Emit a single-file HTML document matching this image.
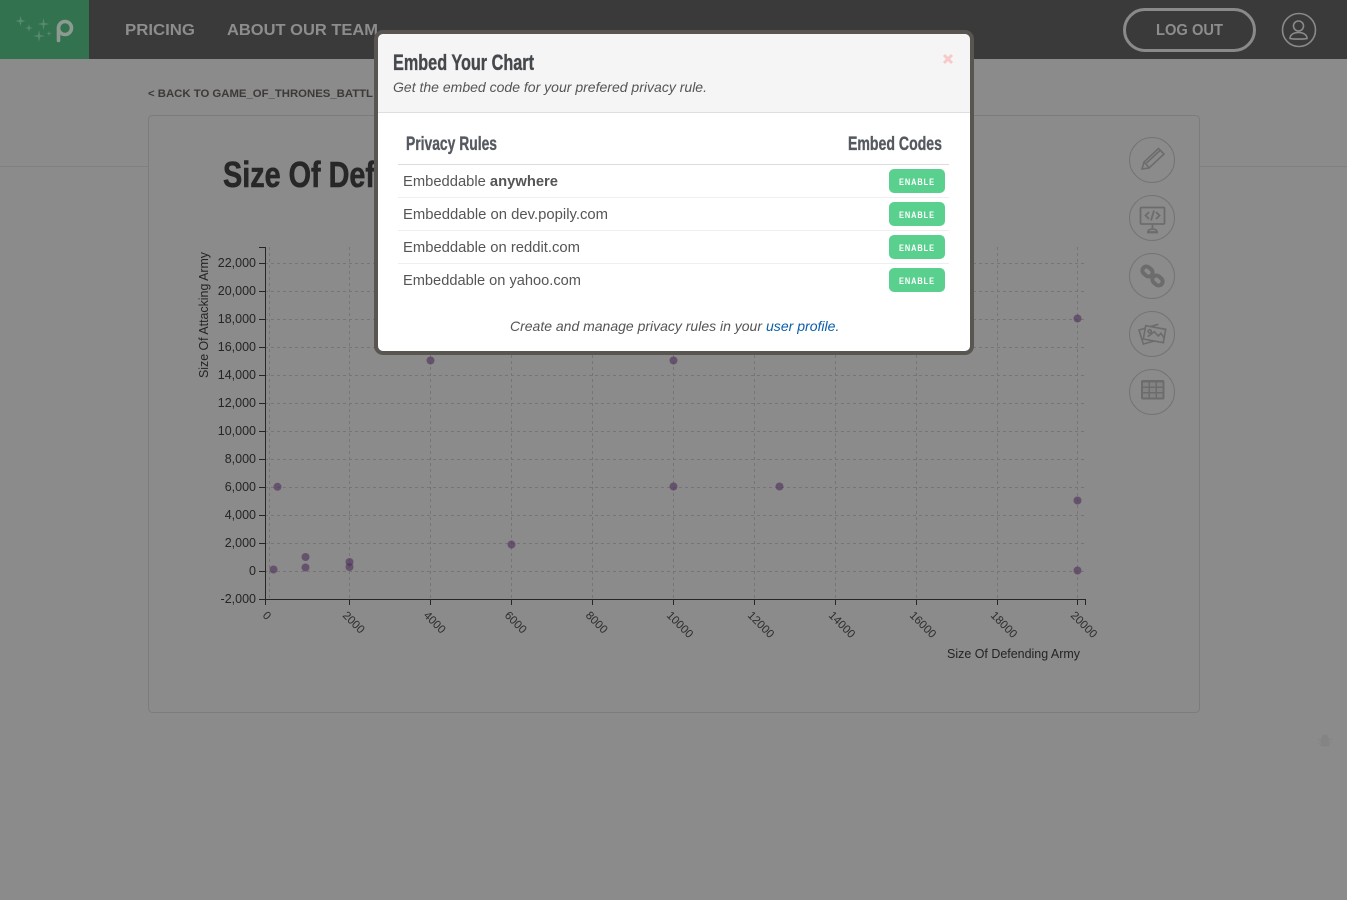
<!DOCTYPE html>
<html><head><meta charset="utf-8"><title>Embed Your Chart</title>
<style>
html,body{margin:0;padding:0;width:1347px;height:900px;overflow:hidden;background:#8b8b8b}
svg{display:block;position:absolute;left:0;top:0}
text{font-family:"Liberation Sans",sans-serif}
.b{font-weight:700}
.y text{font-size:12.5px;fill:#242424;text-anchor:end}
.x text{font-size:11.5px;fill:#2c2c2c}
.row{font-size:14.5px;fill:#555}
.btn{font-size:9.5px;font-weight:700;fill:#fff;letter-spacing:1.2px}
.ic{fill:none;stroke:#6c6c6c;stroke-width:1.6}
.cond{stroke-width:.35;font-weight:700}
</style></head><body>
<svg width="1347" height="900" viewBox="0 0 1347 900" xmlns="http://www.w3.org/2000/svg">
<rect width="1347" height="900" fill="#8b8b8b"/>
<rect y="166" width="1347" height="1" fill="#808080"/>
<!-- header -->
<rect width="1347" height="59" fill="#3a3a3a"/>
<rect width="89" height="59" fill="#32724f"/>
<g fill="#588a70">
<path d="M20.500 16l1 4 4 1-4 1-1 4-1-4-4-1 4-1z"/>
<path d="M29 24l.8 3.200 3.200.8-3.200.8-.8 3.200-.8-3.200-3.200-.8 3.200-.8z"/>
<path d="M43.500 18l1 5 5 1-5 1-1 5-1-5-5-1 5-1z"/>
<path d="M39 30l1 5 5 1-5 1-1 5-1-5-5-1 5-1z"/>
<path d="M49 31l.6 1.900 1.900.6-1.900.6-.6 1.900-.6-1.900-1.900-.6 1.900-.6z"/>
</g>
<circle cx="65" cy="28" r="6.500" fill="none" stroke="#8c9a92" stroke-width="3.600"/>
<path d="M58.500 28V40.500" fill="none" stroke="#8c9a92" stroke-width="3.600" stroke-linecap="round"/>
<text x="125" y="35" class="b" font-size="15.500" fill="#8d8d8d" textLength="70" lengthAdjust="spacingAndGlyphs">PRICING</text>
<text x="227" y="35" class="b" font-size="15.500" fill="#8d8d8d" textLength="151" lengthAdjust="spacingAndGlyphs">ABOUT OUR TEAM</text>
<rect x="1124.500" y="9.500" width="130" height="41" rx="20.500" fill="none" stroke="#8a8a8a" stroke-width="3"/>
<text x="1156" y="35" class="b" font-size="16" fill="#8d8d8d" textLength="67" lengthAdjust="spacingAndGlyphs">LOG OUT</text>
<circle cx="1299" cy="30" r="16.500" fill="none" stroke="#8a8a8a" stroke-width="1.600"/>
<circle cx="1298.500" cy="26" r="5" fill="none" stroke="#8a8a8a" stroke-width="1.600"/>
<path d="M1290 38.500c0-4 4-6 8.500-6s8.500 2 8.500 6c-3 .8-14 .8-17 0z" fill="none" stroke="#8a8a8a" stroke-width="1.600"/>
<!-- back -->
<text x="148" y="97" class="b" font-size="11" fill="#3c3936" textLength="225" lengthAdjust="spacingAndGlyphs">&lt; BACK TO GAME_OF_THRONES_BATTL</text>
<!-- card -->
<rect x="148.500" y="115.500" width="1051" height="597" rx="4" fill="#8b8b8b" stroke="#7c7c7c"/>
<text x="223" y="187" class="cond" font-size="36" fill="#272727" stroke="#272727" style="stroke-width:.6" textLength="152" lengthAdjust="spacingAndGlyphs">Size Of Def</text>
<!-- grid -->
<g fill="none" stroke="#757575" stroke-dasharray="3 3">
<path d="M269.500 247V599M349.500 247V599M430.500 247V599M511.500 247V599M592.500 247V599M673.500 247V599M754.500 247V599M835.500 247V599M916.500 247V599M997.500 247V599M1077.500 247V599"/>
<path d="M265 263.500H1085M265 291.500H1085M265 319.500H1085M265 347.500H1085M265 375.500H1085M265 403.500H1085M265 431.500H1085M265 459.500H1085M265 487.500H1085M265 515.500H1085M265 543.500H1085M265 571.500H1085"/>
</g>
<!-- axes -->
<g fill="none" stroke="#262626">
<path d="M259 247.500H265.500V599.500H259"/>
<path d="M259 263.500H265M259 291.500H265M259 319.500H265M259 347.500H265M259 375.500H265M259 403.500H265M259 431.500H265M259 459.500H265M259 487.500H265M259 515.500H265M259 543.500H265M259 571.500H265"/>
<path d="M265 599.500H1085.500V605M265.500 599.500V605M349.500 599V605M430.500 599V605M511.500 599V605M592.500 599V605M673.500 599V605M754.500 599V605M835.500 599V605M916.500 599V605M997.500 599V605M1077.500 599V605"/>
</g>
<g class="y">
<text x="256" y="267">22,000</text><text x="256" y="295">20,000</text><text x="256" y="323">18,000</text><text x="256" y="351">16,000</text><text x="256" y="379">14,000</text><text x="256" y="407">12,000</text><text x="256" y="435">10,000</text><text x="256" y="463">8,000</text><text x="256" y="491">6,000</text><text x="256" y="519">4,000</text><text x="256" y="547">2,000</text><text x="256" y="575">0</text><text x="256" y="603">-2,000</text>
</g>
<g class="x">
<text transform="translate(262 616) rotate(45)">0</text>
<text transform="translate(342 616) rotate(45)">2000</text>
<text transform="translate(423 616) rotate(45)">4000</text>
<text transform="translate(504 616) rotate(45)">6000</text>
<text transform="translate(585 616) rotate(45)">8000</text>
<text transform="translate(666 616) rotate(45)">10000</text>
<text transform="translate(747 616) rotate(45)">12000</text>
<text transform="translate(828 616) rotate(45)">14000</text>
<text transform="translate(909 616) rotate(45)">16000</text>
<text transform="translate(990 616) rotate(45)">18000</text>
<text transform="translate(1070 616) rotate(45)">20000</text>
</g>
<text transform="translate(208 378) rotate(-90)" font-size="12.500" fill="#242424" textLength="126" lengthAdjust="spacingAndGlyphs">Size Of Attacking Army</text>
<text x="947" y="658" font-size="13" fill="#242424" textLength="133" lengthAdjust="spacingAndGlyphs">Size Of Defending Army</text>
<!-- dots -->
<g fill="#4d2e5c" fill-opacity=".6">
<circle cx="273.500" cy="569.500" r="4"/><circle cx="277.500" cy="486.800" r="4"/><circle cx="305.500" cy="557" r="4"/><circle cx="305.500" cy="567.500" r="4"/><circle cx="349.500" cy="562" r="4"/><circle cx="349.500" cy="567" r="4"/><circle cx="511.500" cy="544.500" r="4"/><circle cx="430.500" cy="360.500" r="4"/><circle cx="673.500" cy="360.500" r="4"/><circle cx="673.500" cy="486.500" r="4"/><circle cx="779.500" cy="486.500" r="4"/><circle cx="1077.500" cy="318.500" r="4"/><circle cx="1077.500" cy="500.500" r="4"/><circle cx="1077.500" cy="570.500" r="4"/>
</g>
<!-- side icons -->
<g fill="none" stroke="#747474">
<circle cx="1152" cy="160" r="22.500"/><circle cx="1152" cy="218" r="22.500"/><circle cx="1152" cy="276" r="22.500"/><circle cx="1152" cy="334" r="22.500"/><circle cx="1152" cy="392" r="22.500"/>
</g>
<path class="ic" d="M1142 169L1144 162L1158.500 148.500L1164 154L1149 168ZM1144.500 162.500l4.500 5M1146.500 163L1160 150.500"/>
<g class="ic" style="stroke-width:1.800">
<rect x="1140.500" y="207.500" width="24" height="16.500" rx="1"/>
<path d="M1149 212l-3.500 3.500 3.500 3.500M1156 212l3.500 3.500-3.500 3.500M1154 210.500l-3 10M1152.500 225v3M1148 232c0-4 9-4 9 0zM1147 232.500h11"/>
</g>
<g fill="none" stroke="#6c6c6c" stroke-width="4">
<rect x="1142" y="267.500" width="11" height="8" rx="4" transform="rotate(42 1147.500 271.500)"/>
<rect x="1152" y="276.500" width="11" height="8" rx="4" transform="rotate(42 1157.500 280.500)"/>
</g>
<g class="ic">
<path d="M1158.300 324.300L1139 330L1143.300 344L1158 340"/>
<path d="M1145.700 325.700L1165.700 329.300L1163.300 342.700L1143.300 339Z" fill="#8b8b8b"/>
<path d="M1147.700 336.700L1154.300 331.700L1158.300 336L1161 333.300L1164.300 338.300"/>
<circle cx="1149.700" cy="331.300" r="1.600"/>
</g>
<rect x="1141" y="380" width="23.500" height="19.500" rx="2" fill="#6c6c6c"/>
<g fill="#838383">
<rect x="1143" y="382.500" width="5.500" height="4"/><rect x="1150" y="382.500" width="5.500" height="4"/><rect x="1157" y="382.500" width="5.500" height="4"/>
<rect x="1143" y="388" width="5.500" height="4"/><rect x="1150" y="388" width="5.500" height="4"/><rect x="1157" y="388" width="5.500" height="4"/>
<rect x="1143" y="393.500" width="5.500" height="4"/><rect x="1150" y="393.500" width="5.500" height="4"/><rect x="1157" y="393.500" width="5.500" height="4"/>
</g>
<!-- bug -->
<path d="M1321 746v-7h8v7zM1322 738a3 3 0 0 1 6 0zM1320 740l-2-1M1330 740l2-1M1320 743h-2M1330 743h2" fill="#848484" stroke="#848484"/>
<!-- modal -->
<rect x="376" y="32" width="596" height="321" rx="7" fill="#fff" stroke="#595550" stroke-width="4"/>
<path d="M378 112V40a6 6 0 0 1 6-6H964a6 6 0 0 1 6 6V112z" fill="#f5f5f5"/>
<rect x="378" y="112" width="592" height="1" fill="#dedede"/>
<text x="393" y="70" class="cond" font-size="22" fill="#45484c" stroke="#45484c" textLength="141" lengthAdjust="spacingAndGlyphs">Embed Your Chart</text>
<text x="393" y="92" font-size="14" font-style="italic" fill="#555" textLength="314" lengthAdjust="spacingAndGlyphs">Get the embed code for your prefered privacy rule.</text>
<path d="M944 55l8 8M952 55l-8 8" stroke="#f7caca" stroke-width="3" fill="none"/>
<text x="406" y="150" class="cond" font-size="19" fill="#555a60" stroke="#555a60" textLength="91" lengthAdjust="spacingAndGlyphs">Privacy Rules</text>
<text x="848" y="150" class="cond" font-size="19" fill="#555a60" stroke="#555a60" textLength="94" lengthAdjust="spacingAndGlyphs">Embed Codes</text>
<rect x="398" y="164" width="551" height="1" fill="#dcdcdc"/>
<rect x="398" y="197" width="551" height="1" fill="#efefef"/>
<rect x="398" y="230" width="551" height="1" fill="#efefef"/>
<rect x="398" y="263" width="551" height="1" fill="#efefef"/>
<text x="403" y="186" class="row" textLength="155" lengthAdjust="spacingAndGlyphs">Embeddable <tspan class="b">anywhere</tspan></text>
<text x="403" y="219" class="row" textLength="205" lengthAdjust="spacingAndGlyphs">Embeddable on dev.popily.com</text>
<text x="403" y="252" class="row" textLength="177" lengthAdjust="spacingAndGlyphs">Embeddable on reddit.com</text>
<text x="403" y="285" class="row" textLength="178" lengthAdjust="spacingAndGlyphs">Embeddable on yahoo.com</text>
<g fill="#5ad08f">
<rect x="889" y="169" width="56" height="24" rx="5"/><rect x="889" y="202" width="56" height="24" rx="5"/><rect x="889" y="235" width="56" height="24" rx="5"/><rect x="889" y="268" width="56" height="24" rx="5"/>
</g>
<text x="899" y="185" class="btn" textLength="36" lengthAdjust="spacingAndGlyphs">ENABLE</text>
<text x="899" y="218" class="btn" textLength="36" lengthAdjust="spacingAndGlyphs">ENABLE</text>
<text x="899" y="251" class="btn" textLength="36" lengthAdjust="spacingAndGlyphs">ENABLE</text>
<text x="899" y="284" class="btn" textLength="36" lengthAdjust="spacingAndGlyphs">ENABLE</text>
<text x="510" y="331" font-size="14" font-style="italic" fill="#555" textLength="252" lengthAdjust="spacingAndGlyphs">Create and manage privacy rules in your</text>
<text x="766" y="331" font-size="14" font-style="italic" fill="#0b5ea8" textLength="69.500" lengthAdjust="spacingAndGlyphs">user profile</text>
<text x="835.500" y="331" font-size="14" font-style="italic" fill="#0b5ea8">.</text>
</svg>
</body></html>
